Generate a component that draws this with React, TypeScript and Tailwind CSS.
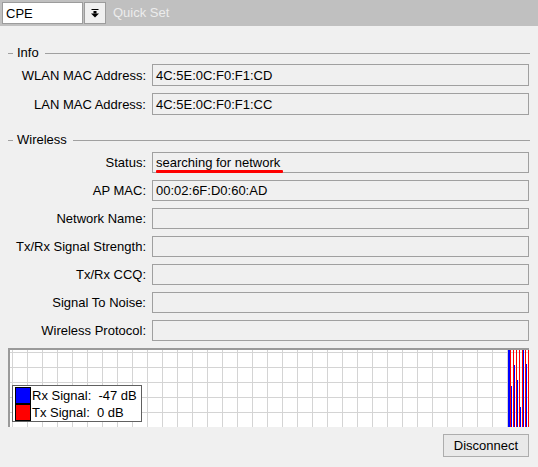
import React from "react";

const font = { fontFamily: '"Liberation Sans", Arial, sans-serif' };

function Header({ title }: { title: string }) {
  return (
    <div className="flex items-center h-[14px] pr-[8px]">
      <div className="ml-[8px] w-[5px] h-px bg-[#a0a0a0]" />
      <span className="ml-[4px] text-[13px] leading-[14px] text-black">{title}</span>
      <div className="ml-[6px] flex-1 h-px bg-[#a0a0a0]" />
    </div>
  );
}

function Row({ label, value, extra, h = "h-[21px]" }: { label: string; value?: string; extra?: React.ReactNode; h?: string }) {
  return (
    <div className={`flex items-center ${h}`}>
      <div className="w-[146px] text-right text-[13px] leading-[15px] text-black whitespace-nowrap">{label}</div>
      <div className={`ml-[6px] mr-[9px] flex-1 ${h} border border-[#a0a0a0] bg-[#f0f0f0] flex items-center pl-[3px] text-[13px] leading-[15px] text-black relative`}>
        {value}
        {extra}
      </div>
    </div>
  );
}

function Chart() {
  const W = 519;
  const H = 77;
  const vlines: number[] = [];
  for (let x = 2; x < W; x += 15) vlines.push(x);
  const hlines = [1.7, 16.5, 31.5, 46.5, 61.5];
  const blue: [number, number][] = [
    [508, 350],
    [511, 386],
    [514, 365],
    [517, 380],
    [520, 407],
    [523, 350],
    [526, 364],
  ];
  const red = [510, 513, 516, 519, 522, 525, 528];
  return (
    <div className="ml-[8px] mr-[9px] h-[79px] border-t-2 border-l-2 border-[#9a9a9a] bg-white relative">
      <svg width={W} height={H} className="block">
        {vlines.map((x) => (
          <line key={"v" + x} x1={x + 0.5} y1={0} x2={x + 0.5} y2={H} stroke="#d4d4d4" strokeWidth={1} />
        ))}
        {hlines.map((y) => (
          <line key={"h" + y} x1={0} y1={Math.round(y) + 0.5} x2={W} y2={Math.round(y) + 0.5} stroke="#d4d4d4" strokeWidth={1} />
        ))}
        {red.map((x) => (
          <rect key={"r" + x} x={x - 10} y={0} width={1} height={H} fill="#ff0000" />
        ))}
        {blue.map(([x, top], i) => (
          <rect key={"b" + x} x={x - 10} y={top - 350} width={i === 0 ? 2 : 1} height={H - (top - 350)} fill="#0000ff" />
        ))}
      </svg>
      <div className="absolute left-[2px] top-[35px] w-[130px] h-[37px] border border-[#606060] bg-white flex flex-col justify-center pl-[2px] gap-0">
        <div className="flex items-center h-[17px]">
          <div className="w-[16px] h-[17px] bg-[#0000ff] border border-black" />
          <span className="ml-[1px] text-[13px] leading-[15px] text-black whitespace-pre">Rx Signal:  -47 dB</span>
        </div>
        <div className="flex items-center h-[17px]">
          <div className="w-[16px] h-[17px] bg-[#ff0000] border border-black" />
          <span className="ml-[1px] text-[13px] leading-[15px] text-black whitespace-pre">Tx Signal:  0 dB</span>
        </div>
      </div>
    </div>
  );
}

export default function App() {
  return (
    <div className="w-[538px] h-[467px] bg-[#f0f0f0] overflow-hidden" style={font}>
      <div className="h-[26px] bg-[#c0c0c0] flex items-start pt-[2px] pl-[2px]">
        <div className="w-[81px] h-[22px] bg-white border border-[#9c9c9c] flex items-center pl-[3px] text-[13px] leading-[15px] text-black">
          CPE
        </div>
        <div className="ml-[1px] w-[22px] h-[22px] bg-[#f0f0f0] border border-[#9c9c9c] flex items-center justify-center">
          <svg width="8" height="9" viewBox="0 0 8 9">
            <rect x="0.5" y="0" width="7" height="1" fill="#000" />
            <rect x="2.5" y="2" width="3" height="2.5" fill="#000" />
            <polygon points="0,4.5 8,4.5 4,8.5" fill="#000" />
          </svg>
        </div>
        <span className="ml-[7px] mt-[3px] text-[13px] leading-[15px] text-[#ececec]">Quick Set</span>
      </div>

      <div className="mt-[20px]">
        <Header title="Info" />
      </div>
      <div className="mt-[4px] flex flex-col gap-[7px]">
        <Row label="WLAN MAC Address:" value="4C:5E:0C:F0:F1:CD" h="h-[22px]" />
        <Row label="LAN MAC Address:" value="4C:5E:0C:F0:F1:CC" h="h-[22px]" />
      </div>

      <div className="mt-[18px]">
        <Header title="Wireless" />
      </div>
      <div className="mt-[5px] flex flex-col gap-[7px]">
        <Row
          label="Status:"
          value="searching for network"
          extra={<div className="absolute left-[3px] top-[17px] w-[127px] h-[3px] bg-[#ff0000] rounded-[1px]" />}
        />
        <Row label="AP MAC:" value="00:02:6F:D0:60:AD" />
        <Row label="Network Name:" />
        <Row label="Tx/Rx Signal Strength:" />
        <Row label="Tx/Rx CCQ:" />
        <Row label="Signal To Noise:" />
        <Row label="Wireless Protocol:" />
      </div>

      <div className="mt-[7px]">
        <Chart />
      </div>

      <div className="mt-[7px] flex justify-end pr-[9px]">
        <button className="w-[86px] h-[23px] border border-[#adadad] bg-[#e9e9e9] text-[13px] leading-[15px] text-black">
          Disconnect
        </button>
      </div>
    </div>
  );
}
